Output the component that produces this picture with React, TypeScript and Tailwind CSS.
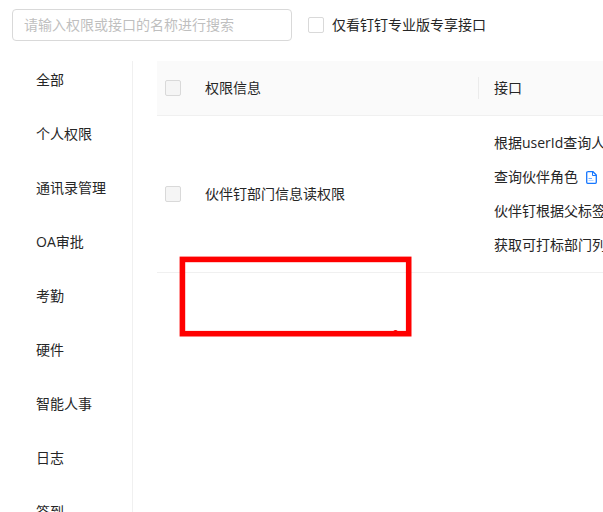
import type { ReactNode } from "react"

const categories = [
  "全部",
  "个人权限",
  "通讯录管理",
  "OA审批",
  "考勤",
  "硬件",
  "智能人事",
  "日志",
  "签到"
]

const apis = [
  { name: "根据userId查询人" },
  { name: "查询伙伴角色", doc: true },
  { name: "伙伴钉根据父标签" },
  { name: "获取可打标部门列" }
]

const DocIcon = () => (
  <svg width="11" height="13" viewBox="0 0 11 13" fill="none" stroke="#1677ff">
    <path d="M1.500 .7H7L10.300 4v7.300a1 1 0 0 1-1 1H1.700a1 1 0 0 1-1-1V1.700a1 1 0 0 1 1-1z" strokeWidth="1.3" />
    <path d="M6.500 1v3.500H10" />
    <path d="M2.500 7.500h3.500" strokeOpacity="0.6" />
    <path d="M2.500 9.500h5" strokeOpacity="0.3" />
  </svg>
)

const Checkbox = ({ label, disabled }: { label: string; disabled?: boolean }) => (
  <input
    type="checkbox"
    aria-label={label}
    disabled={disabled}
    className="block size-4 shrink-0 appearance-none rounded-xs border border-[#d9d9d9] bg-white disabled:bg-[#f5f5f5]"
  />
)

const CheckCell = ({ children }: { children: ReactNode }) => (
  <div className="flex pl-2">{children}</div>
)

const Sidebar = () => (
  <nav className="w-[133px] shrink-0 border-r border-[#f0f0f0] pl-9">
    <ul className="flex flex-col gap-8 pt-2">
      {categories.map((name) => (
        <li key={name}>
          <a href="#" className="block whitespace-nowrap">
            {name}
          </a>
        </li>
      ))}
    </ul>
  </nav>
)

const PermissionTable = () => (
  <table className="w-full min-w-[640px] table-fixed border-collapse text-left">
    <colgroup>
      <col className="w-8" />
      <col className="w-[289px]" />
      <col />
    </colgroup>
    <thead className="bg-[#fafafa]">
      <tr className="border-b border-[#f0f0f0]">
        <th className="py-4 font-normal">
          <CheckCell>
            <Checkbox label="全选" disabled />
          </CheckCell>
        </th>
        <th className="px-4 py-4 font-normal">权限信息</th>
        <th className="py-4 font-normal">
          <div className="border-l border-[#ebebeb] pl-[15px]">接口</div>
        </th>
      </tr>
    </thead>
    <tbody>
      <tr className="border-b border-[#f0f0f0]">
        <td>
          <CheckCell>
            <Checkbox label="伙伴钉部门信息读权限" disabled />
          </CheckCell>
        </td>
        <td className="px-4">伙伴钉部门信息读权限</td>
        <td className="px-4 py-4">
          <ul className="flex flex-col gap-3 whitespace-nowrap">
            {apis.map((api) => (
              <li key={api.name} className="flex items-center gap-2">
                {api.name}
                {api.doc && (
                  <a href="#" aria-label="文档">
                    <DocIcon />
                  </a>
                )}
              </li>
            ))}
          </ul>
        </td>
      </tr>
    </tbody>
  </table>
)

// red marker frame drawn over the table
const Marker = () => (
  <svg
    className="pointer-events-none absolute top-[195px] left-[22px]"
    width="233"
    height="81"
    fill="none"
    stroke="#ff0000"
  >
    <rect x="3.400" y="3.400" width="226.300" height="74.300" strokeWidth="5.600" />
    <circle cx="216.500" cy="76.500" r="2.500" fill="#ff0000" stroke="none" />
  </svg>
)

export default function App() {
  return (
    <div className="flex h-screen flex-col overflow-hidden bg-white font-['Open_Sans','Noto_Sans_CJK_SC',sans-serif] text-[14px] leading-[22px] text-[#262626]">
      <header className="flex items-center gap-4 px-3 pt-[9px] pb-5">
        <input
          type="text"
          aria-label="搜索"
          placeholder="请输入权限或接口的名称进行搜索"
          className="h-8 w-[280px] rounded-sm border border-[#d9d9d9] px-[11px] pb-0.5 placeholder:text-[#bfbfbf]"
        />
        <label className="flex items-center gap-2 whitespace-nowrap">
          <Checkbox label="仅看钉钉专业版专享接口" />
          仅看钉钉专业版专享接口
        </label>
      </header>
      <div className="flex min-h-0 flex-1 gap-6">
        <Sidebar />
        <main className="relative min-w-0 flex-1 overflow-hidden">
          <PermissionTable />
          <Marker />
        </main>
      </div>
    </div>
  )
}
